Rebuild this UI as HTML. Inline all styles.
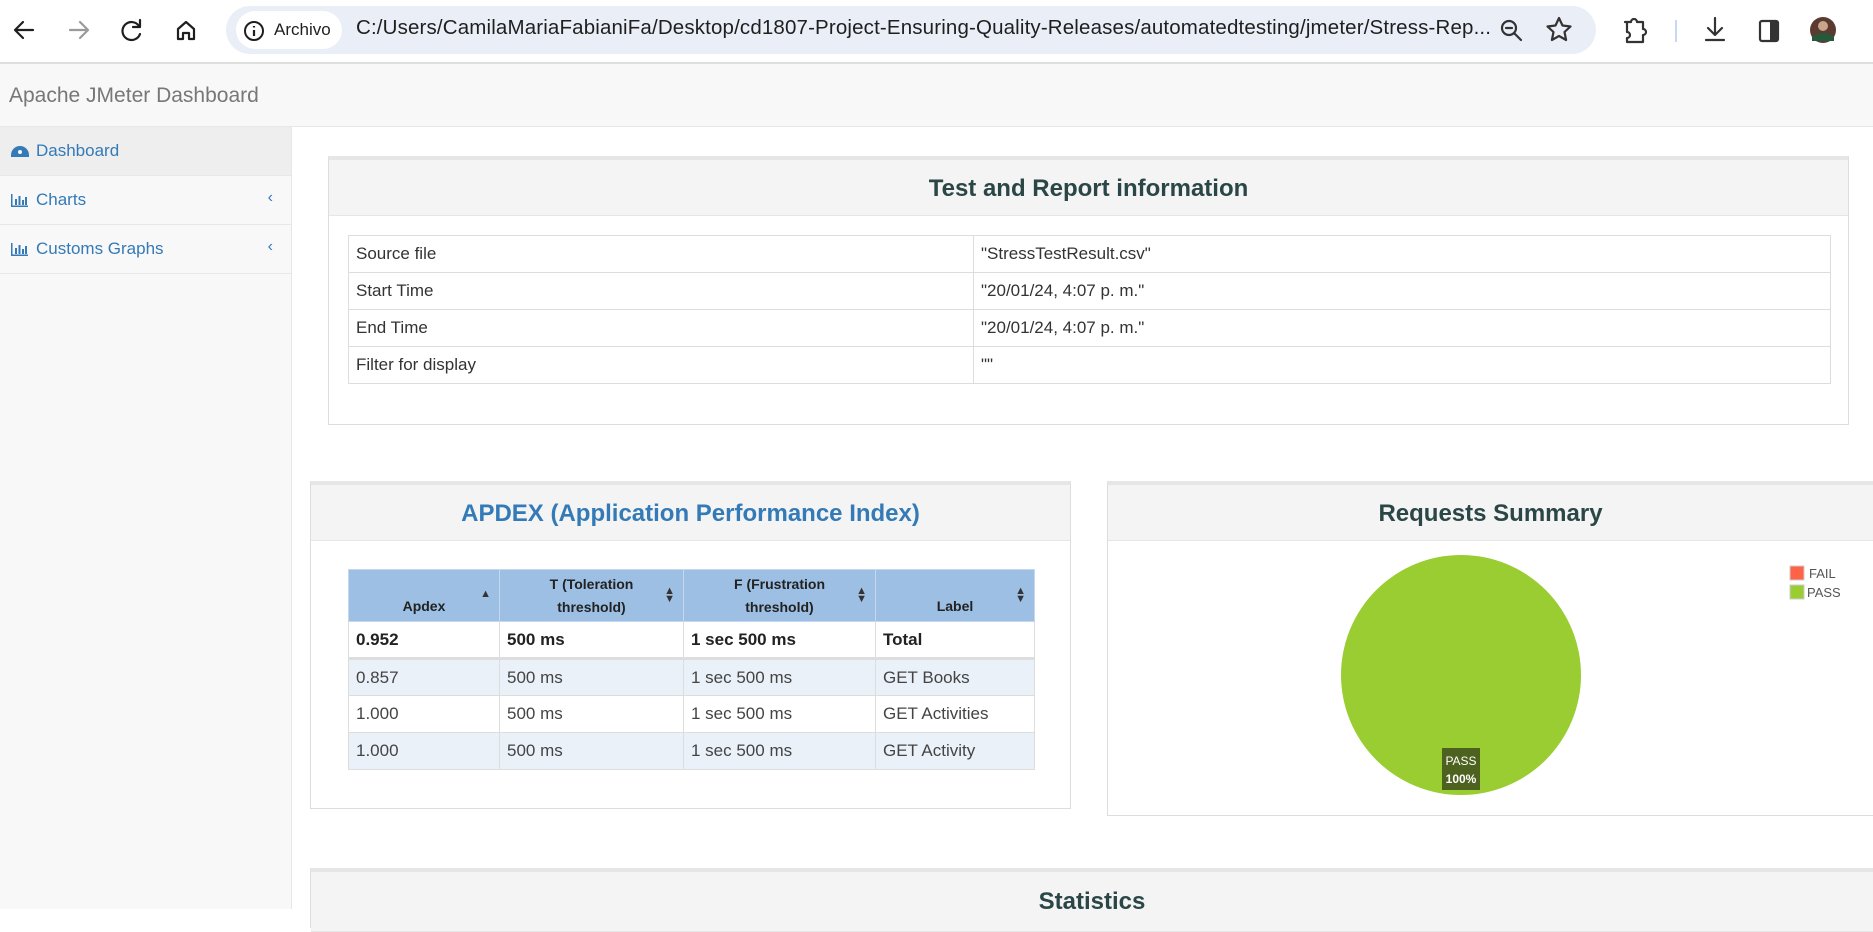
<!DOCTYPE html>
<html><head><meta charset="utf-8"><style>
*{box-sizing:border-box;margin:0;padding:0}
body{width:1873px;height:909px;overflow:hidden;background:#fff;font-family:"Liberation Sans",Arial,sans-serif;position:relative;color:#333}
.abs{position:absolute}
.tb{left:0;top:0;width:1873px;height:64px;background:#fff;border-bottom:2px solid #dedede}
.addr{left:226px;top:6px;width:1370px;height:48px;border-radius:24px;background:#eaeef7}
.chip{left:236px;top:11px;width:106px;height:38px;border-radius:19px;background:#fff;font-size:17px;color:#1f1f1f;line-height:38px;padding-left:38px}
.url{left:356px;top:16px;font-size:20.5px;color:#1f1f1f;letter-spacing:.15px;white-space:nowrap}
.nav{left:0;top:64px;width:1873px;height:63px;background:#f8f8f8;border-bottom:1px solid #e7e7e7}
.nav span{position:absolute;left:9px;top:20px;font-size:21px;color:#777}
.side{left:0;top:127px;width:292px;height:782px;background:#f8f8f8;border-right:1px solid #e7e7e7}
.si{position:absolute;left:0;width:291px;height:49px;border-bottom:1px solid #e7e7e7;color:#337ab7;font-size:17px;line-height:47px;padding-left:36px}
.si .ch{position:absolute;right:18px;top:-2px;color:#337ab7;font-size:16px}
.panel{background:#fff;border:1px solid #ddd;border-top:4px solid #e6e6e6}
.ph{position:absolute;left:0;top:0;right:0;height:56px;background:#f4f4f4;border-bottom:1px solid #e6e6e6;text-align:center;font-weight:bold;font-size:24px;line-height:58px;color:#2b4646}
table{border-collapse:collapse;position:absolute}
td,th{border:1px solid #ddd;font-size:17px;padding:0 7px;text-align:left}
.ti td{height:37px}
.ap th{background:#9cbfe3;font-size:14px;text-align:center;font-weight:bold;color:#222;height:52px;border-color:#c5d7ec;position:relative;line-height:23px}
.ap td{height:37px;color:#444}
.ap tr.alt td{background:#eaf1f9}
.ap tr.tot td{font-weight:bold;color:#222;border-bottom:3px solid #ddd}
.srt{position:absolute;right:8px;top:17px;font-size:11px;line-height:8px;color:#333}
</style></head><body>
<div class="abs tb"></div>
<svg class="abs" style="left:0;top:0" width="240" height="64">
<g fill="none" stroke="#1f1f1f" stroke-width="2.2" stroke-linecap="round" stroke-linejoin="round">
<path d="M33 30H16M23 22l-8 8 8 8"/>
<path d="M70 30h17M80 22l8 8-8 8" stroke="#9a9a9a"/>
<path d="M139 26a9 9 0 1 0 1 8"/><path d="M140 20v7h-7"/>
<path d="M178 39V29l8-7 8 7v10h-5v-6h-6v6z"/>
</g></svg>
<div class="abs addr"></div>
<div class="abs chip">Archivo</div>
<svg class="abs" style="left:243px;top:20px" width="22" height="22"><circle cx="11" cy="11" r="9" fill="none" stroke="#1f1f1f" stroke-width="2"/><path d="M11 10v6M11 6v1.5" stroke="#1f1f1f" stroke-width="2.2"/></svg>
<div class="abs url">C:/Users/CamilaMariaFabianiFa/Desktop/cd1807-Project-Ensuring-Quality-Releases/automatedtesting/jmeter/Stress-Rep...</div>
<svg class="abs" style="left:1495px;top:12px" width="378" height="40">
<g fill="none" stroke="#333" stroke-width="2.2" stroke-linecap="round" stroke-linejoin="round">
<circle cx="14" cy="16" r="7"/><path d="M19 21l7 7M11 16h6"/>
<path d="M64 6l3.5 7.5 8 1-6 5.5 1.6 8-7.1-4-7.1 4 1.6-8-6-5.5 8-1z"/>
<path d="M130 10h6a3 3 0 0 1 6 0h6v7a3 3 0 0 1 0 6v7h-16v-4a3 3 0 0 0 0-6v-10z"/>
<path d="M220 6v16M213 16l7 7 7-7M211 28h18"/>
<rect x="265" y="9" width="18" height="20" rx="2"/>
</g>
<path d="M181 8v22" stroke="#c6d8f5" stroke-width="2"/>
<rect x="275" y="10" width="7" height="18" fill="#333"/>
<circle cx="328" cy="18" r="13" fill="#5b3a30"/><circle cx="328" cy="14" r="5" fill="#c9a58a"/><path d="M317 25q11-8 22 0v4h-22z" fill="#245a3a"/>
</svg>
<div class="abs nav"><span>Apache JMeter Dashboard</span></div>
<div class="abs side">
<div class="si" style="top:0;background:#eee">Dashboard</div>
<div class="si" style="top:49px">Charts<span class="ch">‹</span></div>
<div class="si" style="top:98px">Customs Graphs<span class="ch">‹</span></div>
</div>
<svg class="abs" style="left:10px;top:141px" width="20" height="120" fill="#337ab7">
<path d="M1 14a9 9 0 0 1 18 0v2H1z"/><circle cx="10" cy="11" r="2" fill="#f8f8f8"/>
<g transform="translate(0,49)"><path d="M1 4v13h17v-1.5H2.5V4z"/><rect x="5" y="9" width="2" height="6"/><rect x="8.5" y="6" width="2" height="9"/><rect x="12" y="10" width="2" height="5"/><rect x="15" y="7" width="2" height="8"/></g>
<g transform="translate(0,98)"><path d="M1 4v13h17v-1.5H2.5V4z"/><rect x="5" y="9" width="2" height="6"/><rect x="8.5" y="6" width="2" height="9"/><rect x="12" y="10" width="2" height="5"/><rect x="15" y="7" width="2" height="8"/></g>
</svg>

<div class="abs panel" style="left:328px;top:156px;width:1521px;height:269px">
<div class="ph">Test and Report information</div>
<table class="ti" style="left:19px;top:75px;width:1483px">
<tr><td style="width:625px">Source file</td><td>"StressTestResult.csv"</td></tr>
<tr><td>Start Time</td><td>"20/01/24, 4:07 p. m."</td></tr>
<tr><td>End Time</td><td>"20/01/24, 4:07 p. m."</td></tr>
<tr><td>Filter for display</td><td>""</td></tr>
</table></div>

<div class="abs panel" style="left:310px;top:481px;width:761px;height:328px">
<div class="ph" style="color:#337ab7">APDEX (Application Performance Index)</div>
<table class="ap" style="left:37px;top:84px;width:687px">
<tr><th style="width:151px;vertical-align:bottom;padding-bottom:3px">Apdex<span class="srt" style="top:20px">▲</span></th><th style="width:184px">T (Toleration<br>threshold)<span class="srt">▲<br>▼</span></th><th style="width:192px">F (Frustration<br>threshold)<span class="srt">▲<br>▼</span></th><th style="vertical-align:bottom;padding-bottom:3px">Label<span class="srt">▲<br>▼</span></th></tr>
<tr class="tot"><td>0.952</td><td>500 ms</td><td>1 sec 500 ms</td><td>Total</td></tr>
<tr class="alt"><td>0.857</td><td>500 ms</td><td>1 sec 500 ms</td><td>GET Books</td></tr>
<tr><td>1.000</td><td>500 ms</td><td>1 sec 500 ms</td><td>GET Activities</td></tr>
<tr class="alt"><td>1.000</td><td>500 ms</td><td>1 sec 500 ms</td><td>GET Activity</td></tr>
</table></div>

<div class="abs panel" style="left:1107px;top:481px;width:770px;height:335px;border-right:none">
<div class="ph" style="right:4px">Requests Summary</div></div>
<svg class="abs" style="left:1107px;top:540px" width="766" height="270">
<circle cx="354" cy="135" r="120" fill="#9acd32"/>
<rect x="335" y="208" width="38" height="42" fill="#4e621f"/>
<text x="354" y="225" font-family="Liberation Sans" font-size="12" fill="#fff" text-anchor="middle">PASS</text>
<text x="354" y="243" font-family="Liberation Sans" font-size="12" font-weight="bold" fill="#fff" text-anchor="middle">100%</text>
<rect x="683" y="26" width="14" height="14" fill="#ff6347" stroke="#ccc"/>
<rect x="683" y="45" width="14" height="14" fill="#9acd32" stroke="#ccc"/>
<text x="702" y="38" font-family="Liberation Sans" font-size="13" fill="#545454">FAIL</text>
<text x="700" y="57" font-family="Liberation Sans" font-size="13" fill="#545454">PASS</text>
</svg>

<div class="abs panel" style="left:310px;top:868px;width:1563px;height:60px;border-right:none">
<div class="ph" style="height:60px;line-height:60px">Statistics</div></div>
</body></html>
